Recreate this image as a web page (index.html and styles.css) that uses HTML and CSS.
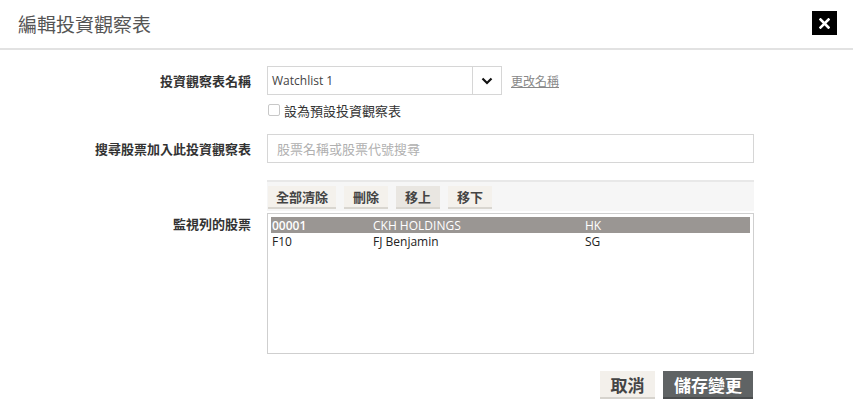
FILE: index.html
```html
<!DOCTYPE html>
<html lang="zh-Hant">
<head>
    <meta charset="UTF-8">
    <meta name="viewport" content="width=device-width, initial-scale=1.0">
    <title>編輯投資觀察表</title>
    <link rel="stylesheet" href="styles.css">
</head>
<body>
    <div class="modal">
        <div class="modal-header">
            <h1>編輯投資觀察表</h1>
            <button class="close-btn" title="關閉">
                <svg width="11" height="11" viewBox="0 0 11 11"><path d="M1.5 1.5 L9.5 9.5 M9.5 1.5 L1.5 9.5" stroke="#fff" stroke-width="2.6" stroke-linecap="square"/></svg>
            </button>
        </div>

        <div class="modal-body">
            <div class="form-row">
                <div class="form-label">投資觀察表名稱</div>
                <div class="form-field">
                    <div class="name-line">
                        <div class="select-box">
                            <span class="select-value">Watchlist 1</span>
                            <span class="select-arrow">
                                <svg width="12" height="8" viewBox="0 0 12 8"><path d="M1.5 1.5 L6 6 L10.5 1.5" fill="none" stroke="#111" stroke-width="2.2"/></svg>
                            </span>
                        </div>
                        <a class="rename-link" href="#">更改名稱</a>
                    </div>
                    <label class="check-line">
                        <span class="check-box"></span>
                        <span>設為預設投資觀察表</span>
                    </label>
                </div>
            </div>

            <div class="form-row">
                <div class="form-label">搜尋股票加入此投資觀察表</div>
                <div class="form-field">
                    <div class="search-box">股票名稱或股票代號搜尋</div>
                </div>
            </div>

            <div class="form-row list-row">
                <div class="form-label">監視列的股票</div>
                <div class="form-field">
                    <div class="toolbar">
                        <button class="tool-btn">全部清除</button>
                        <button class="tool-btn">刪除</button>
                        <button class="tool-btn active">移上</button>
                        <button class="tool-btn">移下</button>
                    </div>
                    <div class="stock-list">
                        <div class="stock-item selected">
                            <span class="col-code">00001</span>
                            <span class="col-name">CKH HOLDINGS</span>
                            <span class="col-market">HK</span>
                        </div>
                        <div class="stock-item">
                            <span class="col-code">F10</span>
                            <span class="col-name">FJ Benjamin</span>
                            <span class="col-market">SG</span>
                        </div>
                    </div>
                </div>
            </div>
        </div>

        <div class="modal-footer">
            <button class="btn btn-cancel">取消</button>
            <button class="btn btn-save">儲存變更</button>
        </div>
    </div>
</body>
</html>
```

FILE: styles.css
```css
* {
    margin: 0;
    padding: 0;
    box-sizing: border-box;
}

body {
    font-family: "Open Sans", "Noto Sans CJK TC", sans-serif;
    background-color: #fff;
    color: #333;
}

button {
    font-family: inherit;
    border: none;
    cursor: pointer;
}

.modal {
    width: 853px;
}

.modal-header {
    height: 50px;
    display: flex;
    align-items: center;
    justify-content: space-between;
    padding: 0 16px 2px 18px;
    border-bottom: 2px solid #e2e2e2;
}

.modal-header h1 {
    font-family: "Noto Sans CJK TC", sans-serif;
    font-size: 19px;
    font-weight: 400;
    color: #555;
}

.close-btn {
    width: 25px;
    height: 24px;
    background-color: #000;
    display: flex;
    align-items: center;
    justify-content: center;
}

.modal-body {
    padding-top: 16px;
}

.form-row {
    display: grid;
    grid-template-columns: 251px 487px;
    column-gap: 16px;
    margin-bottom: 17px;
}

.form-label {
    font-family: "Noto Sans CJK TC", sans-serif;
    font-size: 13px;
    font-weight: 700;
    color: #333;
    text-align: right;
    line-height: 29px;
}

.list-row .form-label {
    padding-top: 36px;
    line-height: 16px;
}

.name-line {
    display: flex;
    align-items: center;
}

.select-box {
    width: 235px;
    height: 29px;
    border: 1px solid #d6d6d6;
    display: flex;
    align-items: stretch;
}

.select-value {
    flex: 1;
    font-size: 12px;
    color: #444;
    line-height: 27px;
    padding-left: 4px;
}

.select-arrow {
    width: 29px;
    border-left: 1px solid #d6d6d6;
    display: flex;
    align-items: center;
    justify-content: center;
}

.rename-link {
    margin-left: 9px;
    font-family: "Noto Sans CJK TC", sans-serif;
    font-size: 12px;
    color: #888;
    text-decoration: underline;
}

.check-line {
    display: flex;
    align-items: center;
    margin-top: 8px;
    padding-left: 1px;
    font-family: "Noto Sans CJK TC", sans-serif;
    font-size: 13px;
    color: #333;
    height: 14px;
}

.check-box {
    width: 12px;
    height: 12px;
    border: 1px solid #c8c8c8;
    border-radius: 2px;
    margin-right: 4px;
}

.search-box {
    height: 29px;
    border: 1px solid #d6d6d6;
    font-family: "Noto Sans CJK TC", sans-serif;
    font-size: 13px;
    color: #b0b0b0;
    line-height: 27px;
    padding-left: 9px;
}

.toolbar {
    display: flex;
    gap: 8px;
    height: 31px;
    padding: 4px 1px 0;
    border-top: 2px solid #e8e8e8;
    background-color: #f6f6f6;
}

.tool-btn {
    height: 23px;
    min-width: 44px;
    padding: 0 8px;
    font-family: "Noto Sans CJK TC", sans-serif;
    font-size: 13px;
    font-weight: 700;
    color: #444;
    background-color: #f4f1ec;
    border-bottom: 2px solid #d9d6d0;
}

.tool-btn.active {
    background-color: #e9e6e1;
}

.stock-list {
    margin-top: 2px;
    height: 141px;
    border: 1px solid #cfcfcf;
    padding: 3px 3px;
}

.stock-item {
    display: flex;
    height: 16px;
    align-items: center;
    font-size: 12px;
    color: #222;
    padding-left: 1px;
}

.stock-item.selected {
    background-color: #9a9693;
    color: #fff;
    font-weight: 600;
}

.stock-item.selected .col-name,
.stock-item.selected .col-market {
    font-weight: 400;
}

.col-code {
    width: 101px;
}

.col-name {
    width: 212px;
}

.modal-footer {
    display: flex;
    justify-content: flex-end;
    gap: 8px;
    width: 754px;
    margin-top: 1px;
}

.btn {
    height: 28px;
    font-family: "Noto Sans CJK TC", sans-serif;
    font-size: 17px;
    font-weight: 700;
    padding: 0 10px;
}

.btn-cancel {
    width: 55px;
    background-color: #f3f0eb;
    color: #444;
    border-bottom: 2px solid #d6d3cd;
}

.btn-save {
    width: 90px;
    margin-right: 1px;
    background-color: #5f6364;
    color: #fff;
    border-bottom: 2px solid #4a4d4e;
}
```
